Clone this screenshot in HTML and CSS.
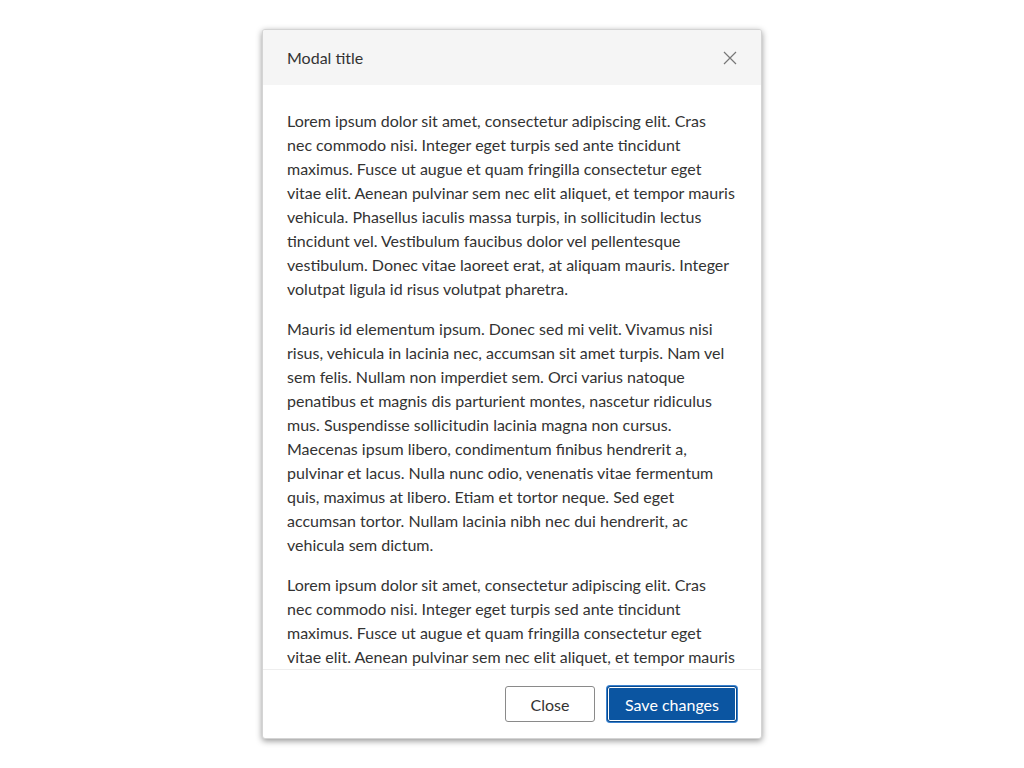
FILE: index.html
```html
<!DOCTYPE html>
<html lang="en">
<head>
<meta charset="utf-8">
<title>Modal</title>
<link rel="stylesheet" href="styles.css">
</head>
<body>
<div class="backdrop">
  <div class="modal" role="dialog">
    <div class="modal-header">
      <h2 class="modal-title">Modal title</h2>
      <button class="close-x" aria-label="Close">
        <svg width="14" height="14" viewBox="0 0 14 14"><path d="M1 1L13 13M13 1L1 13" stroke="#777" stroke-width="1.2" fill="none"/></svg>
      </button>
    </div>
    <div class="modal-body">
      <p>Lorem ipsum dolor sit amet, consectetur adipiscing elit. Cras nec commodo nisi. Integer eget turpis sed ante tincidunt maximus. Fusce ut augue et quam fringilla consectetur eget vitae elit. Aenean pulvinar sem nec elit aliquet, et tempor mauris vehicula. Phasellus iaculis massa turpis, in sollicitudin lectus tincidunt vel. Vestibulum faucibus dolor vel pellentesque vestibulum. Donec vitae laoreet erat, at aliquam mauris. Integer volutpat ligula id risus volutpat pharetra.</p>
      <p>Mauris id elementum ipsum. Donec sed mi velit. Vivamus nisi risus, vehicula in lacinia nec, accumsan sit amet turpis. Nam vel sem felis. Nullam non imperdiet sem. Orci varius natoque penatibus et magnis dis parturient montes, nascetur ridiculus mus. Suspendisse sollicitudin lacinia magna non cursus. Maecenas ipsum libero, condimentum finibus hendrerit a, pulvinar et lacus. Nulla nunc odio, venenatis vitae fermentum quis, maximus at libero. Etiam et tortor neque. Sed eget accumsan tortor. Nullam lacinia nibh nec dui hendrerit, ac vehicula sem dictum.</p>
      <p>Lorem ipsum dolor sit amet, consectetur adipiscing elit. Cras nec commodo nisi. Integer eget turpis sed ante tincidunt maximus. Fusce ut augue et quam fringilla consectetur eget vitae elit. Aenean pulvinar sem nec elit aliquet, et tempor mauris vehicula. Phasellus iaculis massa turpis, in sollicitudin lectus tincidunt vel.</p>
    </div>
    <div class="modal-footer">
      <button class="btn btn-secondary">Close</button>
      <button class="btn btn-primary">Save changes</button>
    </div>
  </div>
</div>
</body>
</html>
```

FILE: styles.css
```css
html, body {
  margin: 0;
  padding: 0;
  height: 100%;
  background: #fff;
  font-family: Lato, "Liberation Sans", sans-serif;
  color: #333;
}
.backdrop {
  height: 100%;
  display: flex;
  align-items: center;
  justify-content: center;
}
.modal {
  width: 500px;
  height: 710px;
  box-sizing: border-box;
  border: 1px solid #d4d4d4;
  border-radius: 3px;
  background: #fff;
  box-shadow: 0 2px 6px rgba(0,0,0,0.42);
  display: flex;
  flex-direction: column;
  overflow: hidden;
}
.modal-header {
  height: 55px;
  flex: none;
  background: #f5f5f5;
  display: flex;
  align-items: center;
  justify-content: space-between;
  padding: 0 24px;
}
.modal-title {
  margin: 0;
  font-size: 16px;
  font-weight: 400;
  color: #333;
}
.close-x {
  border: 0;
  background: none;
  padding: 0;
  width: 14px;
  height: 14px;
  display: flex;
  cursor: pointer;
}
.modal-body {
  flex: 1;
  overflow: hidden;
  padding: 24px 26.1px 0 24px;
  font-size: 16px;
  line-height: 24px;
}
.modal-body p {
  margin: 0 0 16px;
}
.modal-footer {
  flex: none;
  border-top: 1px solid #eee;
  padding: 16px 24px;
  display: flex;
  justify-content: flex-end;
  gap: 12px;
}
.btn {
  height: 36px;
  font-family: inherit;
  font-size: 16px;
  border-radius: 3px;
  padding: 0 8px;
  cursor: pointer;
}
.btn-secondary {
  width: 90px;
  background: #fff;
  border: 1px solid #8a8a8a;
  color: #333;
}
.btn-primary {
  width: 130px;
  background: #0b55a1;
  border: 1px solid #0b4a8c;
  color: #fff;
  box-shadow: 0 0 0 1px #fff inset, 0 0 0 1px #3a82d0;
}
```
